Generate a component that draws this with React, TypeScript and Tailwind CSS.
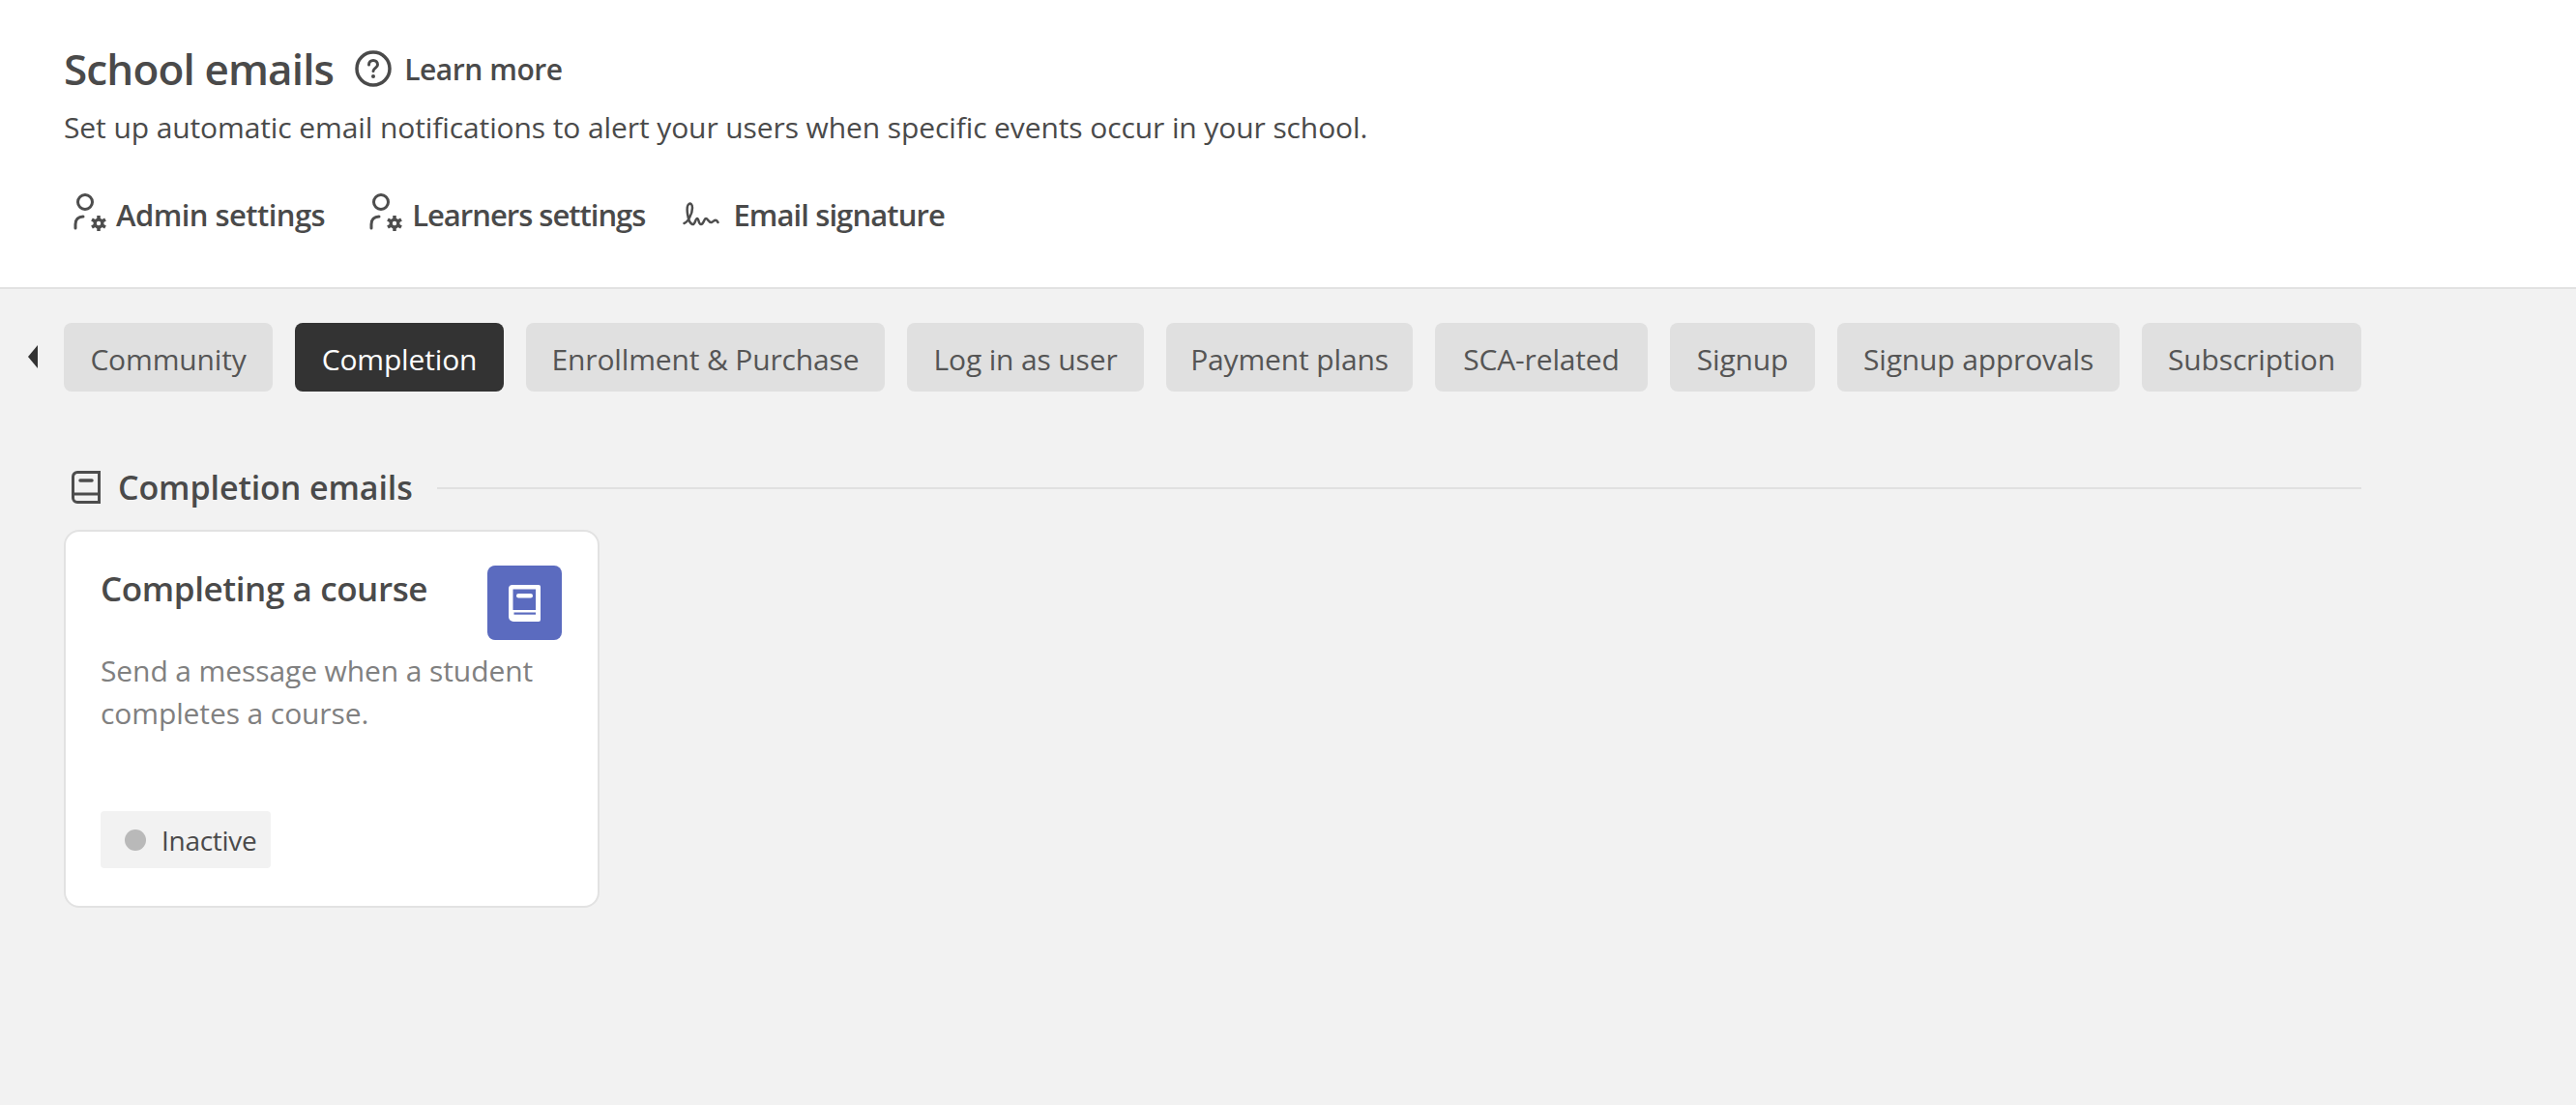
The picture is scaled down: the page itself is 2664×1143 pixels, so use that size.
import React from 'react';

const tabs = [
  { label: 'Community', width: 'w-[216px]' },
  { label: 'Completion', width: 'w-[216px]' },
  { label: 'Enrollment & Purchase', width: 'w-[371px]' },
  { label: 'Log in as user', width: 'w-[245px]' },
  { label: 'Payment plans', width: 'w-[255px]' },
  { label: 'SCA-related', width: 'w-[220px]' },
  { label: 'Signup', width: 'w-[150px]' },
  { label: 'Signup approvals', width: 'w-[292px]' },
  { label: 'Subscription', width: 'w-[227px]' },
];

const UserGearIcon = () => (
  <svg width="40" height="44" viewBox="0 0 40 44" fill="none" className="shrink-0">
    <circle cx="14" cy="9" r="7.500" stroke="#4d4d4d" strokeWidth="3" />
    <path d="M4 36v-4c0-5 3-8 8-8" stroke="#4d4d4d" strokeWidth="3" strokeLinecap="round" />
    <path d="M28 23v16M21 27l14 8M21 35l14-8" stroke="#4d4d4d" strokeWidth="3.500" />
    <circle cx="28" cy="31" r="5.500" fill="#4d4d4d" />
    <circle cx="28" cy="31" r="2.200" fill="#ffffff" />
  </svg>
);

const SignatureIcon = () => (
  <svg width="38" height="28" viewBox="0 0 38 28" fill="none" className="shrink-0">
    <path d="M1.500 23C5 22 10 14 10 7 10 3 8 2 6.500 3 3 5 5 22 10 24c3 1 3-6 5-6s1 6 4 6 3-6 5-6 3 5 6 4c2-1 3-3 5-2l1.500 2" stroke="#4d4d4d" strokeWidth="2.500" strokeLinecap="round" strokeLinejoin="round" />
  </svg>
);

const SectionBookIcon = () => (
  <svg width="30" height="34" viewBox="0 0 30 34" fill="none">
    <path d="M6 1.500h22.500v31H6A4.500 4.500 0 0 1 1.500 28V6A4.500 4.500 0 0 1 6 1.500Z" stroke="#4d4d4d" strokeWidth="3" />
    <path d="M2 24h26" stroke="#4d4d4d" strokeWidth="3" />
    <path d="M9 10h12" stroke="#4d4d4d" strokeWidth="3.500" strokeLinecap="round" />
  </svg>
);

const CardBookIcon = () => (
  <svg width="33" height="38" viewBox="0 0 33 38" fill="none">
    <path d="M4 0h27a2 2 0 0 1 2 2v34a2 2 0 0 1-2 2H5a5 5 0 0 1-5-5V4a4 4 0 0 1 4-4Z" fill="#ffffff" />
    <rect x="4.500" y="4.500" width="23.500" height="21.500" fill="#5b6bbf" />
    <rect x="8" y="9" width="17" height="4.500" rx="2.250" fill="#ffffff" />
    <rect x="5.500" y="28.500" width="22.500" height="2.200" fill="#5b6bbf" />
  </svg>
);

const App: React.FC = () => {
  return (
    <div className="min-h-[1143px] bg-[#f2f2f2] text-[#4a4a4a] font-['Open_Sans',sans-serif]">
      <header className="h-[299px] bg-white border-b-2 border-[#e2e2e2] pl-[66px] pt-[43px]">
        <div className="flex items-center h-[56px]">
          <h1 className="text-[44px] leading-[56px] font-semibold tracking-[-0.85px]">School emails</h1>
          <svg width="38" height="38" viewBox="0 0 38 38" fill="none" className="ml-[22px]">
            <circle cx="19" cy="19" r="17" stroke="#4a4a4a" strokeWidth="3.500" />
            <path d="M14.500 15c0-2.800 2-4.500 4.500-4.500s4.500 1.700 4.500 4.500c0 3.200-4.500 3.500-4.500 6.500" stroke="#4a4a4a" strokeWidth="3" strokeLinecap="round" />
            <circle cx="19" cy="27" r="2" fill="#4a4a4a" />
          </svg>
          <span className="ml-[13px] text-[30px] font-semibold tracking-[-0.45px]">Learn more</span>
        </div>
        <p className="mt-[13px] text-[30px] leading-[40px] tracking-[-0.1px]">Set up automatic email notifications to alert your users when specific events occur in your school.</p>
        <nav className="flex items-center mt-[48px] h-[44px] text-[31px] font-semibold">
          <div className="flex items-center ml-[8px]">
            <UserGearIcon />
            <span className="ml-[6px] tracking-[-0.55px]">Admin settings</span>
          </div>
          <div className="flex items-center ml-[44px]">
            <UserGearIcon />
            <span className="ml-[6px] tracking-[-1px]">Learners settings</span>
          </div>
          <div className="flex items-center ml-[39px]">
            <SignatureIcon />
            <span className="ml-[14px] tracking-[-0.9px]">Email signature</span>
          </div>
        </nav>
      </header>

      <main className="pl-[66px] w-[2376px] box-content">
        <div className="relative flex items-center justify-between pt-[35px]">
          <span className="absolute left-[-37px] top-[58px] w-0 h-0 border-y-[12px] border-y-transparent border-r-[10px] border-r-[#333333]" />
          {tabs.map(tab => (
            <button
              key={tab.label}
              className={`${tab.width} h-[71px] pt-[3px] rounded-[8px] text-[30px] tracking-[-0.15px] whitespace-nowrap ${tab.label === 'Completion' ? 'bg-[#333333] text-white' : 'bg-[#e0e0e0] text-[#555555]'}`}
            >
              {tab.label}
            </button>
          ))}
        </div>

        <div className="flex items-center mt-[77px] h-[44px]">
          <div className="ml-[8px] flex"><SectionBookIcon /></div>
          <h2 className="ml-[18px] text-[34px] font-semibold tracking-[-0.1px] whitespace-nowrap">Completion emails</h2>
          <div className="ml-[25px] mt-[2px] flex-1 h-[2px] bg-[#e0e0e0]" />
        </div>

        <div className="mt-[22px] w-[554px] h-[391px] bg-white border-2 border-[#e2e2e2] rounded-[16px] pl-[36px] pr-[37px] pt-[35px]">
          <div className="flex justify-between items-start">
            <h3 className="mt-[2px] text-[35px] leading-[44px] font-semibold tracking-[-0.4px]">Completing a course</h3>
            <div className="w-[77px] h-[77px] rounded-[8px] bg-[#5b6bbf] flex items-center justify-center">
              <CardBookIcon />
            </div>
          </div>
          <p className="mt-[10px] text-[30px] leading-[44px] tracking-[-0.1px] text-[#808080]">Send a message when a student completes a course.</p>
          <div className="mt-[79px] inline-flex items-center h-[59px] w-[176px] rounded-[4px] bg-[#f2f2f2] pl-[25px]">
            <span className="w-[22px] h-[22px] rounded-full bg-[#b9b9b9]" />
            <span className="ml-[16px] text-[28px] tracking-[-0.3px]">Inactive</span>
          </div>
        </div>
      </main>
    </div>
  );
};

export default App;
